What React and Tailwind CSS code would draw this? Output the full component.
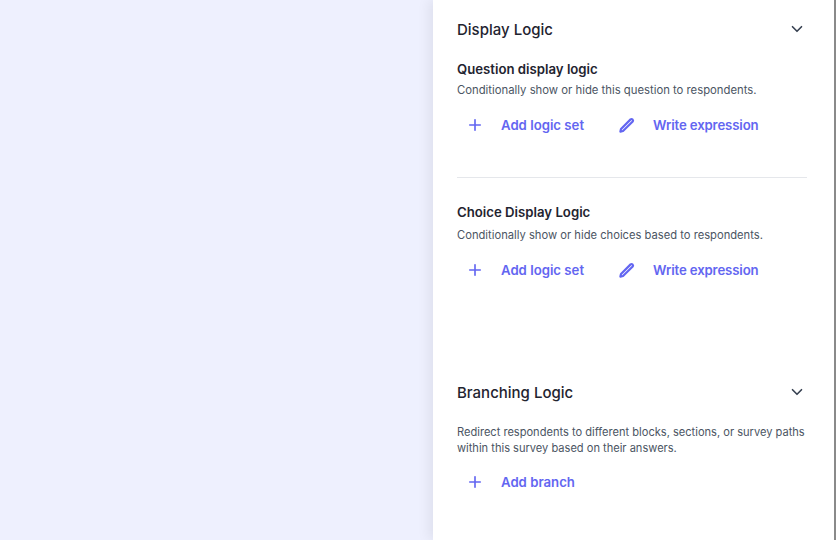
import React from 'react';
import { ChevronDown, Plus } from 'lucide-react';

function PencilIcon() {
    return (
        <svg width="18" height="18" viewBox="0 0 18 18" fill="none" stroke="currentColor" strokeWidth="2.2" strokeLinejoin="round">
            <path d="M2.400 15.600 3 13 12.600 3.400a1.500 1.500 0 0 1 2.100 2.100L5 15z" />
        </svg>
    );
}

function ActionButton({ icon, label, labelClass = '' }) {
    return (
        <button className="flex items-center text-[13.2px] leading-[20px] font-semibold text-[#6366f1]">
            <span className="flex w-9 justify-center">{icon}</span>
            <span className={`ml-2 ${labelClass}`}>{label}</span>
        </button>
    );
}

function LogicActions() {
    return (
        <div className="flex items-center gap-[25px]">
            <ActionButton icon={<Plus size={18} strokeWidth={2.2} />} label="Add logic set" />
            <ActionButton icon={<PencilIcon />} label="Write expression" labelClass="tracking-[-0.13px]" />
        </div>
    );
}

function SectionHeader({ title }) {
    return (
        <div className="flex items-center justify-between pr-[1px]">
            <h2 className="text-[15px] leading-6 font-medium text-[#1f2430]">{title}</h2>
            <ChevronDown size={18} strokeWidth={2.2} className="mb-[2px] text-[#374151]" />
        </div>
    );
}

export default function App() {
    return (
        <div className="flex h-[540px] w-[836px] overflow-hidden bg-[#eef0fe] font-['Inter',sans-serif]">
            <div className="flex-1" />
            <aside className="h-full w-[401px] bg-white pt-[18px] pr-[27px] pl-[24px] shadow-[-4px_0_12px_rgba(0,0,0,0.07)]">
                <SectionHeader title="Display Logic" />

                <h3 className="mt-[17px] text-[13.2px] leading-5 font-semibold text-[#1f2430]">Question display logic</h3>
                <p className="mt-[3px] text-[11.3px] leading-4 text-[#4b5563]">Conditionally show or hide this question to respondents.</p>
                <div className="mt-[17px]">
                    <LogicActions />
                </div>

                <div className="mt-[42px] border-t border-[#e5e7eb]" />

                <h3 className="mt-6 text-[13.2px] leading-5 font-semibold text-[#1f2430]">Choice Display Logic</h3>
                <p className="mt-[5px] text-[11.2px] leading-4 text-[#4b5563]">Conditionally show or hide choices based to respondents.</p>
                <div className="mt-[17px]">
                    <LogicActions />
                </div>

                <div className="mt-[101px]">
                    <SectionHeader title="Branching Logic" />
                </div>
                <p className="mt-[19px] text-[11.08px] leading-4 text-[#4b5563]">
                    Redirect respondents to different blocks, sections, or survey paths within this survey based on their answers.
                </p>
                <div className="mt-4">
                    <ActionButton icon={<Plus size={18} strokeWidth={2.2} />} label="Add branch" />
                </div>
            </aside>
            <div className="h-full w-[2px] bg-[#8a8a8a]" />
        </div>
    );
}
